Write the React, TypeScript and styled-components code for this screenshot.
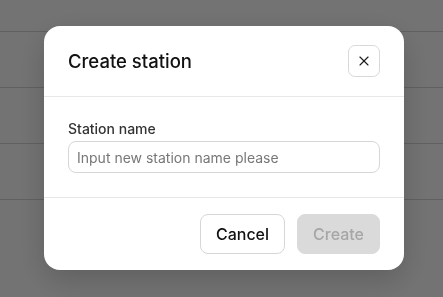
import styled, { createGlobalStyle } from "styled-components";
import { X } from "lucide-react";

const GlobalStyle = createGlobalStyle`
    html, body {
        margin: 0;
        padding: 0;
        background: #ffffff;
        font-family: Inter, "Noto Sans", sans-serif;
    }
`;

const Page = styled.div`
    width: 100%;
    height: 297px;
    overflow: hidden;
`;

const TableHead = styled.div`
    height: 32px;
    border-bottom: 1px solid #d6d6d6;
    box-sizing: border-box;
`;

const Row = styled.div`
    height: 56px;
    border-bottom: 1px solid #d6d6d6;
    box-sizing: border-box;
`;

const Overlay = styled.div`
    position: fixed;
    inset: 0;
    background: rgba(0, 0, 0, 0.55);
    display: flex;
    align-items: center;
    justify-content: center;
    padding: 0 0 1px 5px;
`;

const Modal = styled.div`
    width: 360px;
    background: #ffffff;
    border-radius: 16px;
    box-shadow: 0 10px 30px rgba(0, 0, 0, 0.18);
    overflow: hidden;
`;

const Header = styled.div`
    display: flex;
    align-items: center;
    justify-content: space-between;
    padding: 19px 24px;
    border-bottom: 1px solid #e8e8e8;
`;

const Title = styled.h2`
    margin: 0;
    font-size: 18.5px;
    font-weight: 500;
    color: #111111;
`;

const CloseButton = styled.button`
    width: 32px;
    height: 32px;
    display: flex;
    align-items: center;
    justify-content: center;
    padding: 0;
    background: #ffffff;
    border: 1px solid #d9d9d9;
    border-radius: 7px;
    color: #1a1a1a;
`;

const Body = styled.div`
    display: flex;
    flex-direction: column;
    gap: 2px;
    padding: 22px 24px 24px;
    border-bottom: 1px solid #e8e8e8;
`;

const Label = styled.label`
    font-size: 14px;
    line-height: 20px;
    font-weight: 500;
    color: #333333;
`;

const Input = styled.input`
    height: 32px;
    box-sizing: border-box;
    border: 1px solid #d6d6d6;
    border-radius: 8px;
    padding: 0 8px;
    font-family: Inter, "Noto Sans", sans-serif;
    font-size: 14px;
    color: #222222;
    outline: none;
    &::placeholder {
        color: #777777;
    }
`;

const Footer = styled.div`
    display: flex;
    justify-content: flex-end;
    gap: 12px;
    padding: 16px 24px;
`;

const Button = styled.button<{ $primary?: boolean }>`
    height: 40px;
    padding: 0 15px;
    box-sizing: border-box;
    border-radius: 8px;
    font-family: Inter, "Noto Sans", sans-serif;
    font-size: 16px;
    font-weight: 500;
    border: 1px solid ${(p) => (p.$primary ? "#dadada" : "#d6d6d6")};
    background: ${(p) => (p.$primary ? "#dadada" : "#ffffff")};
    color: ${(p) => (p.$primary ? "#a6a6a6" : "#111111")};
`;

function App() {
    return (
        <Page>
            <GlobalStyle />
            <TableHead />
            {[0, 1, 2].map((i) => (
                <Row key={i} />
            ))}
            <Overlay>
                <Modal>
                    <Header>
                        <Title>Create station</Title>
                        <CloseButton aria-label="Close">
                            <X size={16} strokeWidth={1.7} />
                        </CloseButton>
                    </Header>
                    <Body>
                        <Label htmlFor="station">Station name</Label>
                        <Input id="station" placeholder="Input new station name please" />
                    </Body>
                    <Footer>
                        <Button>Cancel</Button>
                        <Button $primary disabled>
                            Create
                        </Button>
                    </Footer>
                </Modal>
            </Overlay>
        </Page>
    );
}

export default App;
